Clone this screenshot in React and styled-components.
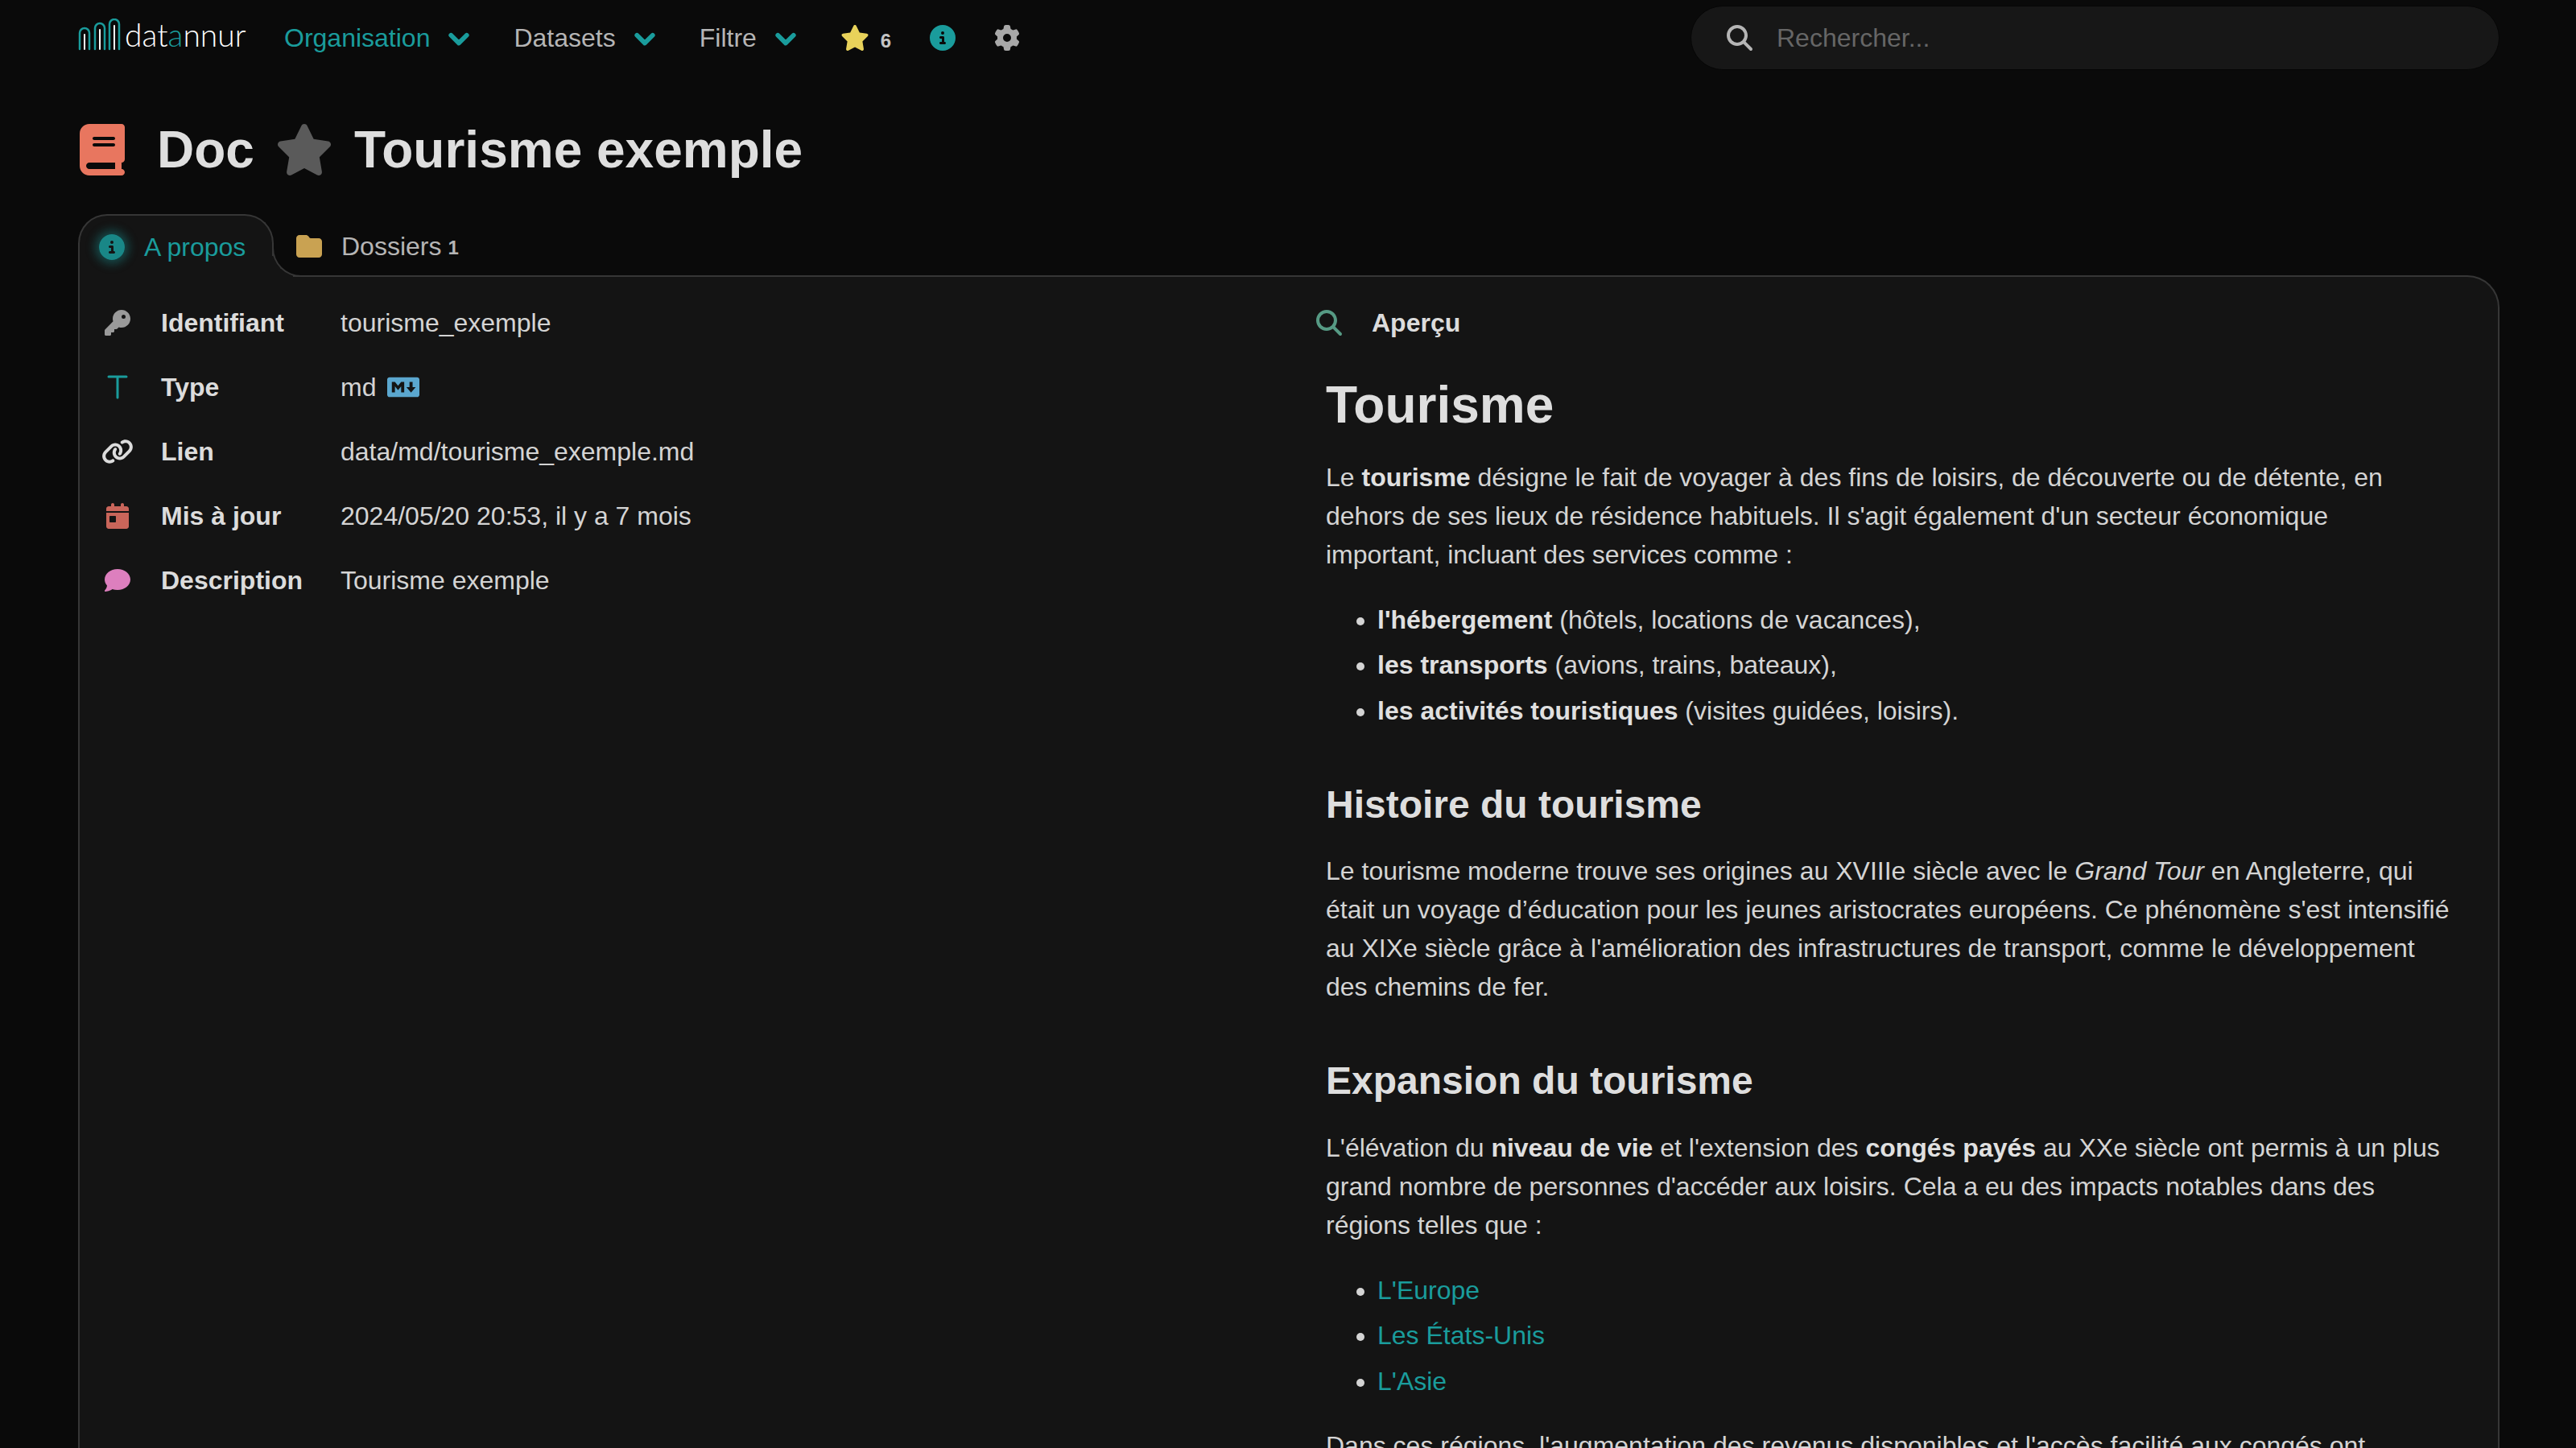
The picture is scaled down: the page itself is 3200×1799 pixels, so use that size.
import React from 'react';
import styled, { createGlobalStyle } from 'styled-components';
import {
  FaBook,
  FaCalendarDay,
  FaChevronDown,
  FaCircleInfo,
  FaComment,
  FaFolder,
  FaGear,
  FaKey,
  FaLink,
  FaMagnifyingGlass,
  FaMarkdown,
  FaStar
} from 'react-icons/fa6';

const teal = '#1a9c9c';
const panel = '#141414';
const line = '#363636';
const text = '#d4d4d4';

const GlobalStyle = createGlobalStyle`
  html, body {
    margin: 0;
    background: #0a0a0a;
  }
  body {
    color: ${text};
    font-family: "Liberation Sans", Arial, sans-serif;
    font-size: 32px;
    line-height: 48px;
  }
`;

const Logo = () => (
  <LogoWrap>
    <svg width="54" height="40" viewBox="0 0 54 40" fill="none" strokeLinecap="round">
      <g stroke={teal} strokeWidth="2.5">
        <path d="M2 38V18a6 6 0 0 1 12 0v20" />
        <path d="M21 38V12a6 6 0 0 1 12 0v26" />
        <path d="M39 38V7a6 6 0 0 1 12 0v31" />
      </g>
      <g stroke="#fff" strokeWidth="2">
        <path d="M8 38V20" />
        <path d="M27 38V14" />
        <path d="M45 38V9" />
      </g>
    </svg>
    <LogoText>
      dat<em>a</em>nnur
    </LogoText>
  </LogoWrap>
);

const TIcon = () => (
  <svg width="26" height="30" viewBox="0 0 26 30" fill="none" stroke={teal} strokeWidth="3" strokeLinecap="round">
    <path d="M2 2h22M13 2v26" />
  </svg>
);

const rows = [
  { icon: <FaKey color="#9a9a9a" size={32} />, label: 'Identifiant', value: 'tourisme_exemple' },
  {
    icon: <TIcon />,
    label: 'Type',
    value: (
      <>
        md <FaMarkdown color="#5ba7cf" size={40} />
      </>
    )
  },
  { icon: <FaLink color="#dcdcdc" size={40} />, label: 'Lien', value: 'data/md/tourisme_exemple.md' },
  { icon: <FaCalendarDay color="#c9655a" size={32} />, label: 'Mis à jour', value: '2024/05/20 20:53, il y a 7 mois' },
  { icon: <FaComment color="#dd7fbe" size={32} />, label: 'Description', value: 'Tourisme exemple' }
];

const Chevron = () => <FaChevronDown color={teal} size={26} stroke={teal} strokeWidth={50} />;

const App = () => {
  return (
    <Page>
      <GlobalStyle />
      <Navbar>
        <Logo />
        <NavMenu $active>
          Organisation <Chevron />
        </NavMenu>
        <NavMenu>
          Datasets <Chevron />
        </NavMenu>
        <NavMenu>
          Filtre <Chevron />
        </NavMenu>
        <Favorites>
          <FaStar color="#e8d25a" size={36} />
          <small>6</small>
        </Favorites>
        <FaCircleInfo color={teal} size={32} />
        <FaGear color="#a8a8a8" size={32} />
        <SearchBox>
          <FaMagnifyingGlass color="#b5b5b5" size={32} />
          <span>Rechercher...</span>
        </SearchBox>
      </Navbar>

      <Title>
        <FaBook color="#e8765f" size={64} />
        <span>Doc</span>
        <FaStar color="#5a5a5a" size={72} />
        <span>Tourisme exemple</span>
      </Title>

      <Tabs>
        <ActiveTab>
          <InfoGlow>
            <FaCircleInfo color={teal} size={32} />
          </InfoGlow>
          A propos
        </ActiveTab>
        <Tab>
          <FaFolder color="#c9a252" size={32} />
          <span>Dossiers</span>
          <TabCount>1</TabCount>
        </Tab>
      </Tabs>

      <Panel>
        <Infos>
          {rows.map((row) => (
            <InfoRow key={row.label}>
              <RowIcon>{row.icon}</RowIcon>
              <RowLabel>{row.label}</RowLabel>
              <RowValue>{row.value}</RowValue>
            </InfoRow>
          ))}
        </Infos>

        <Preview>
          <PreviewHead>
            <FaMagnifyingGlass color="#569a84" size={32} />
            <RowLabel>Aperçu</RowLabel>
          </PreviewHead>
          <Content>
            <h1>Tourisme</h1>
            <p>
              Le <strong>tourisme</strong> désigne le fait de voyager à des fins de loisirs, de découverte ou de détente,
              en
              <br />
              dehors de ses lieux de résidence habituels. Il s'agit également d'un secteur économique
              <br />
              important, incluant des services comme :
            </p>
            <ul>
              <li>
                <strong>l'hébergement</strong> (hôtels, locations de vacances),
              </li>
              <li>
                <strong>les transports</strong> (avions, trains, bateaux),
              </li>
              <li>
                <strong>les activités touristiques</strong> (visites guidées, loisirs).
              </li>
            </ul>
            <h2>Histoire du tourisme</h2>
            <p>
              Le tourisme moderne trouve ses origines au XVIIIe siècle avec le <em>Grand Tour</em> en Angleterre, qui
              <br />
              était un voyage d’éducation pour les jeunes aristocrates européens. Ce phénomène s'est intensifié
              <br />
              au XIXe siècle grâce à l'amélioration des infrastructures de transport, comme le développement
              <br />
              des chemins de fer.
            </p>
            <h2>Expansion du tourisme</h2>
            <p>
              L'élévation du <strong>niveau de vie</strong> et l'extension des <strong>congés payés</strong> au XXe
              siècle ont permis à un plus
              <br />
              grand nombre de personnes d'accéder aux loisirs. Cela a eu des impacts notables dans des
              <br />
              régions telles que :
            </p>
            <ul>
              <li>
                <a href="#europe">L'Europe</a>
              </li>
              <li>
                <a href="#usa">Les États-Unis</a>
              </li>
              <li>
                <a href="#asie">L'Asie</a>
              </li>
            </ul>
            <p>Dans ces régions, l'augmentation des revenus disponibles et l'accès facilité aux congés ont</p>
          </Content>
        </Preview>
      </Panel>
    </Page>
  );
};

export default App;

const Page = styled.div`
  height: 1799px;
  overflow: hidden;
  padding: 0 95px 0 97px;
  box-sizing: border-box;
`;

const Navbar = styled.nav`
  display: flex;
  align-items: center;
  gap: 48px;
  height: 94px;
`;

const LogoWrap = styled.div`
  display: flex;
  align-items: flex-end;
  gap: 4px;
  width: 206px;
  height: 40px;
  margin-bottom: 8px;
  margin-right: 2px;

  svg {
    flex: none;
  }
`;

const LogoText = styled.span`
  font-family: Lato, sans-serif;
  font-weight: 300;
  font-size: 39px;
  line-height: 40px;
  color: #fff;

  em {
    font-style: normal;
    color: ${teal};
  }
`;

const NavMenu = styled.div`
  display: flex;
  align-items: center;
  gap: 23px;
  margin-right: 7px;
  color: ${(p) => (p.$active ? teal : '#b5b5b5')};
`;

const Favorites = styled.div`
  display: flex;
  align-items: center;
  gap: 14px;

  small {
    font-size: 24px;
    font-weight: 700;
    line-height: 24px;
    color: #c4c4c4;
    margin-top: 8px;
  }
`;

const SearchBox = styled.div`
  display: flex;
  align-items: center;
  gap: 30px;
  width: 1005px;
  height: 80px;
  margin-left: auto;
  padding-left: 44px;
  box-sizing: border-box;
  background: #171717;
  border: 1px solid #060606;
  border-radius: 40px;
  color: #666;
`;

const Title = styled.h1`
  display: flex;
  align-items: center;
  gap: 26px;
  height: 64px;
  margin: 60px 0 48px;
  font-size: 64px;
  line-height: 64px;
  font-weight: 700;
  color: #dedede;

  svg:first-child {
    margin: 0 10px 0 -2px;
  }
`;

const Tabs = styled.div`
  display: flex;
  align-items: stretch;
  height: 78px;
  position: relative;
  z-index: 1;
`;

const ActiveTab = styled.div`
  position: relative;
  display: flex;
  align-items: center;
  gap: 24px;
  width: 243px;
  padding: 2px 0 0 24px;
  box-sizing: border-box;
  background: ${panel};
  border: 2px solid ${line};
  border-bottom: none;
  border-radius: 36px 36px 0 0;
  color: ${teal};

  &::after {
    content: '';
    position: absolute;
    right: -38px;
    bottom: 0;
    width: 36px;
    height: 36px;
    border-left: 2px solid ${line};
    border-bottom: 2px solid ${line};
    border-bottom-left-radius: 36px;
    box-shadow: -12px 12px 0 ${panel};
    clip-path: inset(0 0 0 -2px);
  }
`;

const InfoGlow = styled.span`
  display: flex;
  border-radius: 50%;
  box-shadow: 0 0 12px 5px rgba(26, 156, 156, 0.4);

  svg {
    opacity: 0.85;
  }
`;

const Tab = styled.div`
  display: flex;
  align-items: center;
  gap: 24px;
  padding: 2px 0 0 28px;
  color: #b5b5b5;
`;

const TabCount = styled.span`
  margin: 4px 0 0 -16px;
  font-size: 24px;
  font-weight: 700;
`;

const Panel = styled.section`
  display: grid;
  grid-template-columns: 1524px 1fr;
  margin-top: -2px;
  min-height: 1500px;
  padding-top: 17px;
  background: ${panel};
  border: 2px solid ${line};
  border-bottom: none;
  border-radius: 0 40px 0 0;
`;

const Infos = styled.div`
  display: flex;
  flex-direction: column;
`;

const InfoRow = styled.div`
  display: grid;
  grid-template-columns: 86px 223px 1fr;
  align-items: center;
  height: 80px;
  padding-left: 15px;
`;

const RowIcon = styled.span`
  display: flex;
  justify-content: center;
  width: 64px;
`;

const RowLabel = styled.span`
  font-weight: 700;
  color: #dcdcdc;
`;

const RowValue = styled.span`
  display: flex;
  align-items: center;
  gap: 14px;
`;

const Preview = styled.div`
  padding-right: 40px;
`;

const PreviewHead = styled.div`
  display: flex;
  align-items: center;
  gap: 37px;
  height: 79.5px;
  margin-left: 12px;
`;

const Content = styled.div`
  padding-left: 24px;

  h1 {
    margin: 26px 0 30px;
    font-size: 64px;
    line-height: 72px;
    font-weight: 700;
    color: #dedede;
  }

  h2 {
    margin: 63px 0 28.5px;
    font-size: 48px;
    line-height: 60px;
    font-weight: 700;
    color: #dedede;
  }

  p {
    margin: 0 0 33px;
  }

  ul {
    margin: 0 0 32px;
    padding-left: 64px;
  }

  li {
    margin-bottom: 8.5px;
  }

  strong {
    font-weight: 700;
    color: #e0e0e0;
  }

  a {
    color: ${teal};
    text-decoration: none;
  }
`;
